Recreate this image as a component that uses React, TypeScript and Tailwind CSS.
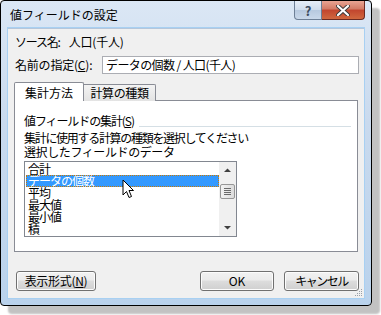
import React from 'react'

const btn =
    'h-[20px] rounded-[3px] border border-[#707070] bg-[linear-gradient(#f2f2f2_0%,#ebebeb_45%,#dddddd_50%,#cfcfcf_100%)] shadow-[inset_0_0_0_1px_#fcfcfc] flex items-center justify-center text-[12px] leading-none'

const items = ['合計', 'データの個数', '平均', '最大値', '最小値', '積']

const Cursor: React.FC = () => (
    <svg width="13" height="20" viewBox="0 0 13 20" className="absolute left-[122px] top-[179px]">
        <path d="M1 1 L1 16 L4.5 12.5 L7 18.5 L9.5 17.5 L7 11.5 L11.5 11.5 Z" fill="#fff" stroke="#000" strokeWidth="1" strokeLinejoin="round" />
    </svg>
)

export default function App() {
    return (
        <div className="relative w-[381px] h-[315px] bg-white font-['Noto_Sans_CJK_JP',sans-serif] text-black text-[12px] leading-[14px]">
            <div className="w-[372px] h-[306px] border border-black rounded-[4px] bg-[linear-gradient(180deg,#dbe7f5_0%,#c9daee_40%,#b9d2ec_100%)] shadow-[8px_8px_2px_#c2c2c2] flex flex-col">
                {/* title bar */}
                <div className="h-[27px] flex items-start pl-[9px] pr-[6px]">
                    <span className="mt-[7px] text-[12px] leading-[14px]">値フィールドの設定</span>
                    <div className="ml-auto flex">
                        <div className="w-[28px] h-[19px] rounded-bl-[4px] border border-t-0 border-[#6d7f96] bg-[linear-gradient(#e6eef8_0%,#cfdcec_50%,#b7c9df_52%,#c9d8ea_100%)] flex items-center justify-center text-[13px] font-bold text-[#3c4b5e] leading-none">?</div>
                        <div className="w-[43px] h-[19px] rounded-br-[4px] border border-t-0 border-l-0 border-[#6b2a22] bg-[linear-gradient(#e8a493_0%,#d27a65_45%,#c2452e_50%,#d0683f_100%)] flex items-center justify-center">
                            <svg width="14" height="11" viewBox="0 0 14 11">
                                <path d="M2 1 L12 10 M12 1 L2 10" stroke="#3a3a3a" strokeWidth="4" strokeLinecap="round" />
                                <path d="M2 1 L12 10 M12 1 L2 10" stroke="#fff" strokeWidth="2.2" strokeLinecap="round" />
                            </svg>
                        </div>
                    </div>
                </div>
                {/* client */}
                <div className="mx-[7px] w-[356px] h-[270px] bg-[#f0f0f0] border-t border-[#b5c6db] shadow-[0_0_0_1px_#a8d0f2] flex flex-col px-[6px]">
                    <div className="mt-[6px] h-[14px] flex pl-[1px]">
                        <span className="tracking-[-1.2px]">ソース名:</span>
                        <span className="ml-[9px] tracking-[-0.2px]">人口(千人)</span>
                    </div>
                    <div className="mt-[7px] h-[18px] flex items-center pl-[1px]">
                        <span className="tracking-[-0.2px]">名前の指定(<span className="underline">C</span>):</span>
                        <div className="ml-auto mr-[-1px] w-[257px] h-[18px] bg-white border border-[#abadb3] flex items-center pl-[3px] tracking-[-0.6px] whitespace-pre">
                            データの個数 / 人口(千人)
                        </div>
                    </div>
                    {/* tabs */}
                    <div className="mt-[8px] h-[19px] flex items-end relative z-10">
                        <div className="w-[70px] h-[19px] bg-white border border-b-0 border-[#898c95] rounded-t-[2px] flex items-center justify-center pt-[1px]">集計方法</div>
                        <div className="w-[72px] h-[17px] border border-b-0 border-l-0 border-[#898c95] rounded-tr-[2px] bg-[linear-gradient(#f3f3f3,#e3e3e3)] flex items-center justify-center tracking-[-0.4px]">計算の種類</div>
                    </div>
                    <div className="h-[152px] mt-[-1px] bg-white border border-[#898c95] flex flex-col pl-[9px] pr-[6px] relative">
                        <div className="mt-[13px] h-[14px] flex items-end">
                            <span className="whitespace-nowrap tracking-[-1.1px]">値フィールドの集計(<span className="underline">S</span>)</span>
                            <div className="flex-1 h-0 border-t border-[#d5dfe5] mb-[1px] ml-[5px]" />
                        </div>
                        <div className="mt-[3px] h-[14px] whitespace-nowrap tracking-[-1.3px]">集計に使用する計算の種類を選択してください</div>
                        <div className="h-[14px] whitespace-nowrap tracking-[-0.4px]">選択したフィールドのデータ</div>
                        <div className="mt-[2px] w-[213px] h-[76px] border border-[#828790] bg-white flex">
                            <div className="flex-1 pt-[1px] flex flex-col">
                                {items.map((it, i) => (
                                    <div
                                        key={it}
                                        className={
                                            i === 1
                                                ? 'ml-[1px] h-[12px] leading-[12px] pl-[2px] tracking-[-1px] bg-[#3399ff] text-white outline outline-1 outline-dotted outline-[#cc7a00] -outline-offset-1'
                                                : 'ml-[1px] h-[12px] leading-[12px] pl-[2px] tracking-[-1px]'
                                        }
                                    >
                                        {it}
                                    </div>
                                ))}
                            </div>
                            <div className="w-[17px] bg-[#f0f0f0] flex flex-col items-center">
                                <svg width="17" height="17" viewBox="0 0 17 17">
                                    <path d="M5 10 L8.5 6.5 L12 10 Z" fill="#404040" />
                                </svg>
                                <div className="mt-[5px] w-[15px] h-[15px] rounded-[2px] border border-[#969696] bg-[linear-gradient(90deg,#f2f2f2,#dcdcdc)] flex flex-col items-center justify-center gap-[1px]">
                                    <div className="w-[7px] h-px bg-[#6a6a6a]" />
                                    <div className="w-[7px] h-px bg-[#6a6a6a]" />
                                    <div className="w-[7px] h-px bg-[#6a6a6a]" />
                                    <div className="w-[7px] h-px bg-[#6a6a6a]" />
                                </div>
                                <svg width="17" height="17" viewBox="0 0 17 17" className="mt-auto">
                                    <path d="M5 7 L8.5 10.5 L12 7 Z" fill="#404040" />
                                </svg>
                            </div>
                        </div>
                    </div>
                    {/* buttons */}
                    <div className="mt-[19px] flex items-center pl-[2px]">
                        <div className={`${btn} w-[80px] tracking-[-0.3px]`}>表示形式(<span className="underline">N</span>)</div>
                        <div className={`${btn} w-[74px] ml-auto border-[#3c7fb1] shadow-[inset_0_0_0_1px_#7fd3f7]`}>OK</div>
                        <div className={`${btn} w-[75px] ml-[10px] mr-[-1px] tracking-[-1.5px]`}>キャンセル</div>
                    </div>
                    <div className="relative flex-1">
                        <svg width="10" height="10" viewBox="0 0 10 10" className="absolute right-[-5px] bottom-[1px]">
                            <g fill="#9aa0a8">
                                <rect x="8" y="2" width="1" height="1" />
                                <rect x="6" y="4" width="1" height="1" />
                                <rect x="8" y="4" width="1" height="1" />
                                <rect x="4" y="6" width="1" height="1" />
                                <rect x="6" y="6" width="1" height="1" />
                                <rect x="8" y="6" width="1" height="1" />
                                <rect x="2" y="8" width="1" height="1" />
                                <rect x="4" y="8" width="1" height="1" />
                                <rect x="6" y="8" width="1" height="1" />
                                <rect x="8" y="8" width="1" height="1" />
                            </g>
                        </svg>
                    </div>
                </div>
            </div>
            <Cursor />
        </div>
    )
}
